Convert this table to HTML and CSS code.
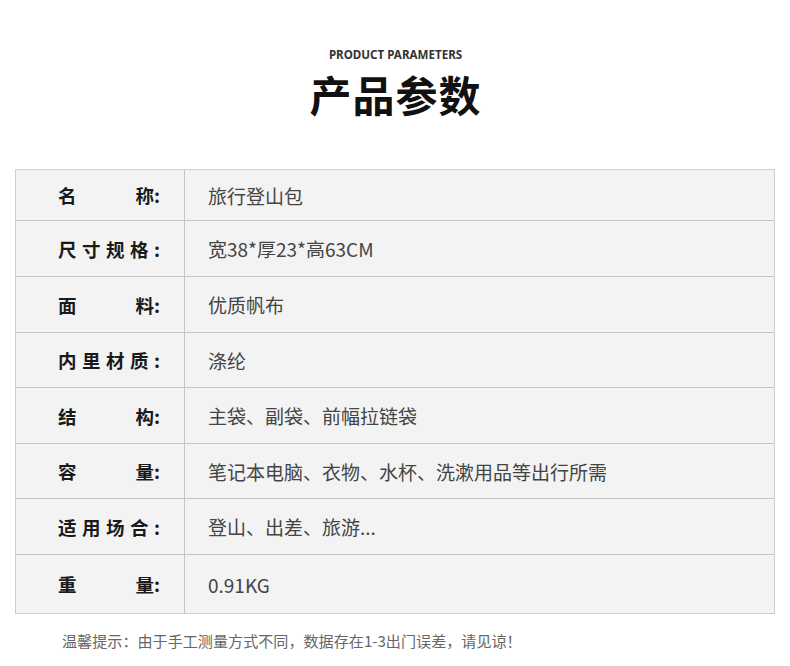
FILE: index.html
```html
<!DOCTYPE html>
<html lang="zh">
<head>
<meta charset="utf-8">
<link rel="stylesheet" href="styles.css">
</head>
<body>
<div class="page">
  <header class="head">
    <div class="en">PRODUCT PARAMETERS</div>
    <h1 class="cn">产品参数</h1>
  </header>
  <div class="table">
    <div class="row r1"><div class="lab"><span>名</span><span>称:</span></div><div class="val">旅行登山包</div></div>
    <div class="row r2"><div class="lab"><span>尺</span><span>寸</span><span>规</span><span>格</span><span>:</span></div><div class="val">宽38*厚23*高63CM</div></div>
    <div class="row r3"><div class="lab"><span>面</span><span>料:</span></div><div class="val">优质帆布</div></div>
    <div class="row r4"><div class="lab"><span>内</span><span>里</span><span>材</span><span>质</span><span>:</span></div><div class="val">涤纶</div></div>
    <div class="row r5"><div class="lab"><span>结</span><span>构:</span></div><div class="val">主袋、副袋、前幅拉链袋</div></div>
    <div class="row r6"><div class="lab"><span>容</span><span>量:</span></div><div class="val">笔记本电脑、衣物、水杯、洗漱用品等出行所需</div></div>
    <div class="row r7"><div class="lab"><span>适</span><span>用</span><span>场</span><span>合</span><span>:</span></div><div class="val">登山、出差、旅游...</div></div>
    <div class="row r8"><div class="lab"><span>重</span><span>量:</span></div><div class="val">0.91KG</div></div>
  </div>
  <p class="note">温馨提示：由于手工测量方式不同，数据存在1-3出门误差，请见谅！</p>
</div>
</body>
</html>
```

FILE: styles.css
```css
* { box-sizing: border-box; }
html, body { margin: 0; padding: 0; background: #fff; }
body {
  font-family: "Noto Sans CJK SC", "Noto Sans", sans-serif;
  color: #222;
}
.page {
  width: 790px;
  height: 666px;
  overflow: hidden;
  padding-top: 47px;
}
.head {
  text-align: center;
  margin-left: 1px;
}
.en {
  font-family: "Noto Sans", "Open Sans", sans-serif;
  font-weight: 700;
  font-size: 11.6px;
  line-height: 16px;
  color: #333;
}
.cn {
  margin: 1px 0 0 0;
  font-size: 42px;
  line-height: 60px;
  font-weight: 700;
  color: #111;
  letter-spacing: 1px;
}
.table {
  margin: 45px 0 0 15px;
  width: 760px;
  background: #f3f3f3;
  border: 1px solid #cfcfcf;
}
.row {
  display: flex;
  align-items: stretch;
  border-top: 1px solid #c4c4c4;
}
.row.r1 { border-top: none; height: 50px; }
.r2 { height: 56px; }
.r3 { height: 56px; }
.r4 { height: 55px; }
.r5 { height: 56px; }
.r6 { height: 55px; }
.r7 { height: 56px; }
.r8 { height: 59px; }
.lab {
  width: 169px;
  flex: none;
  border-right: 1px solid #c4c4c4;
  padding: 0 24px 0 42px;
  display: flex;
  justify-content: space-between;
  align-items: center;
  font-size: 18.5px;
  font-weight: 700;
  color: #1a1a1a;
}
.val {
  padding-left: 23px;
  display: flex;
  align-items: center;
  font-size: 19px;
  color: #444;
}
.note {
  margin: 15px 0 0 62px;
  font-size: 15.1px;
  line-height: 22px;
  color: #666;
}
```
